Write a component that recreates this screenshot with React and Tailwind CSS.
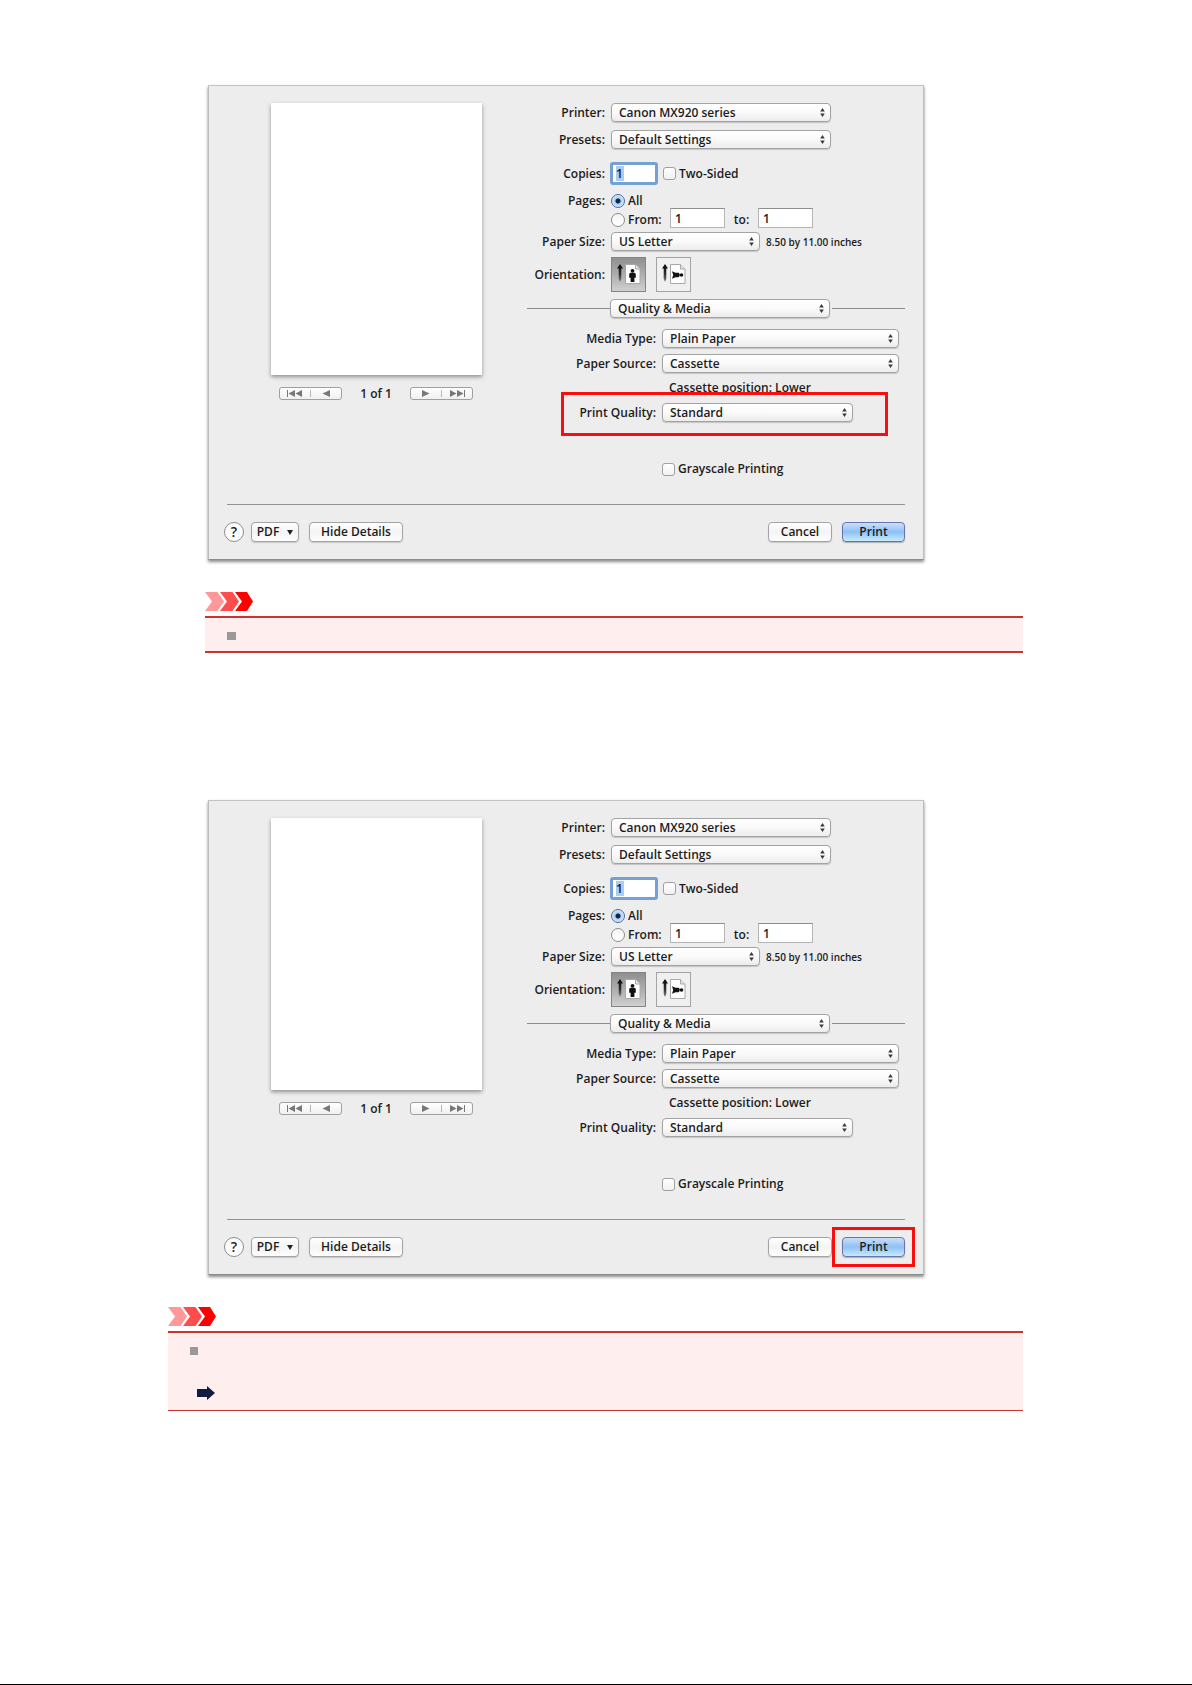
import React, { useId } from "react";

const buttonStyle =
  "h-5 rounded-[4px] border border-[#a3a3a3] bg-linear-to-b from-white via-[#f4f4f4] to-[#fdfdfd] text-center leading-4 shadow-[0_1px_1px_#c8c8c8]";

function Select({ id, label, value, width }) {
  return (
    <div className={`relative ${width}`}>
      <select
        id={id}
        aria-label={label}
        defaultValue={value}
        className="block h-[19px] w-full appearance-none rounded-[4px] border border-[#a3a3a3] bg-linear-to-b from-white via-[#fafafa] to-[#ececec] pl-[7px] leading-4 shadow-[0_1px_1px_#c4c4c4]"
      >
        <option>{value}</option>
      </select>
      <svg viewBox="0 0 5 9" className="pointer-events-none absolute top-[5px] right-[6px] h-[9px] w-[5px]">
        <path d="M2.5 0 4.8 3.4H.2zM2.5 9 .2 5.6h4.6z" fill="#3a3a3a" />
      </svg>
    </div>
  );
}

// Label on the left, control on the right
function Row({ label, htmlFor, children, className = "", labelWidth = "w-[78px]" }) {
  return (
    <div className={`flex items-center ${className}`}>
      <label htmlFor={htmlFor} className={`shrink-0 text-right whitespace-nowrap ${labelWidth}`}>
        {label}
      </label>
      {children}
    </div>
  );
}

function Checkbox({ id, label, className = "" }) {
  return (
    <label htmlFor={id} className={`flex items-center gap-[3px] ${className}`}>
      <input
        id={id}
        type="checkbox"
        className="size-[13px] appearance-none rounded-[3px] border border-[#a0a0a0] bg-linear-to-b from-white to-[#f1f1f1]"
      />
      {label}
    </label>
  );
}

const radioStyle =
  "size-[14px] appearance-none rounded-full border border-[#8c8c8c] bg-linear-to-b from-[#f4f4f4] to-white checked:border-[#4a6c9c] checked:bg-[radial-gradient(circle_at_center,#14263f_0_2px,#a9cdf5_3px,#d3eafd_6px)]";

const fieldStyle = "h-5 w-[55px] border border-[#b4b4b4] border-t-[#8e8e8e] bg-white pl-[4px] leading-4";

function OrientationIcon({ landscape }) {
  const fade = useId();
  return (
    <svg viewBox="0 0 33 33" className="size-[33px]">
      <defs>
        <linearGradient id={fade} gradientUnits="userSpaceOnUse" x1="0" y1="9" x2="0" y2="24">
          <stop offset="0" stopColor="#111" />
          <stop offset="0.5" stopColor="#333" />
          <stop offset="1" stopColor="#888" />
        </linearGradient>
      </defs>
      <path d="M8 6 11 10.500H9.300V21L8 24 6.700 21V10.500H5z" fill={`url(#${fade})`} />
      <path d="M13.5 6.5h10l4.500 4.500v14.500H13.500z" fill="#fdfdfd" stroke="#a8a8a8" />
      <path d="M23.500 6.500V11H28" fill="#e4e4e4" stroke="#a8a8a8" />
      {landscape ? (
        <g fill="#111">
          <circle cx="24.500" cy="17" r="1.800" />
          <path d="M15 13.200l3.500 1.600h3q1.300.6 1.300 2.200t-1.300 2.200h-3L15 20.800l1.200-3.800z" />
        </g>
      ) : (
        <g fill="#111">
          <circle cx="20.500" cy="12.800" r="1.900" />
          <path d="M18.800 14.800h3.400q1.600.2 1.600 1.800v3.200h-1.400V24h-3.800v-4.200h-1.400v-3.200q0-1.600 1.600-1.800z" />
        </g>
      )}
    </svg>
  );
}

function NavButtons({ icons, names }) {
  return (
    <div className="flex h-[13px] w-[63px] items-center rounded-[3px] border border-[#a0a0a0] bg-linear-to-b from-white to-[#f0f0f0]">
      {icons.map((d, i) => (
        <button
          key={names[i]}
          type="button"
          aria-label={names[i]}
          className={`flex h-[7px] flex-1 justify-center ${i === 1 ? "border-l border-[#b5b5b5]" : ""}`}
        >
          <svg viewBox="0 0 16 7" className="h-[7px] w-4">
            <path d={d} fill="#777" />
          </svg>
        </button>
      ))}
    </div>
  );
}

function PrintDialog({ mark }) {
  const id = useId();
  return (
    <form className="max-w-[716px] border border-t-[#c4c4c4] border-r-[#bcbcbc] border-b-[#8c8c8c] border-l-[#bcbcbc] bg-[#ededed] pt-[17px] pr-[18px] pb-[17px] pl-[17px] font-['Open_Sans',sans-serif] text-[12px] leading-4 font-semibold text-[#1c1c1c] shadow-[0_2px_3px_#8a8a8a]">
      <div className="flex justify-between">
        <div className="ml-[45px] w-[211px]">
          <div className="h-[272px] bg-white shadow-[0_2px_4px_#909090]" />
          <div className="mt-[12px] flex h-[13px] items-center justify-between pr-[9px] pl-2">
            <NavButtons
              names={["First page", "Previous page"]}
              icons={["M0 0h1v7H0zM8 0v7L1.500 3.500zM15 0v7L8.500 3.500z", "M12 0v7L4.500 3.500z"]}
            />
            <span>1 of 1</span>
            <NavButtons
              names={["Next page", "Last page"]}
              icons={["M4 0v7l7.500-3.500z", "M1 0v7l6.500-3.500zM8 0v7l6.500-3.500zM15 0h1v7h-1z"]}
            />
          </div>
        </div>

        <div className="w-[378px]">
          <Row label="Printer:" htmlFor={id + "printer"}>
            <Select id={id + "printer"} value="Canon MX920 series" width="ml-[6px] w-[220px]" />
          </Row>
          <Row label="Presets:" htmlFor={id + "presets"} className="mt-2">
            <Select id={id + "presets"} value="Default Settings" width="ml-[6px] w-[220px]" />
          </Row>
          <Row label="Copies:" htmlFor={id + "copies"} className="mt-[13px]">
            <div className="mr-[5px] ml-[5px] flex h-[23px] w-12 items-center rounded-[3px] border-[3px] border-[#75a0d3] bg-white pl-[3px]">
              <input
                id={id + "copies"}
                defaultValue="1"
                className="h-[15px] w-2 bg-[#a9cdf3] leading-4 outline-none"
              />
            </div>
            <Checkbox id={id + "sides"} label="Two-Sided" />
          </Row>

          <div className="mt-2 flex h-[15px] items-center">
            <span className="w-[78px] text-right">Pages:</span>
            <label className="ml-[6px] flex items-center gap-[3px]">
              <input type="radio" name={id + "pages"} defaultChecked className={radioStyle} />
              All
            </label>
          </div>
          <div className="ml-[84px] flex items-end">
            <label className="flex w-[59px] items-center gap-[3px]">
              <input type="radio" name={id + "pages"} className={radioStyle} />
              From:
            </label>
            <input aria-label="From page" defaultValue="1" className={fieldStyle} />
            <label htmlFor={id + "to"} className="w-[33px] text-center">
              to:
            </label>
            <input id={id + "to"} defaultValue="1" className={fieldStyle} />
          </div>

          <Row label="Paper Size:" htmlFor={id + "size"} className="mt-[4px]">
            <Select id={id + "size"} value="US Letter" width="ml-[6px] w-[149px]" />
            <span className="ml-[6px] text-[10px]">8.50 by 11.00 inches</span>
          </Row>
          <div className="mt-[6px] flex items-center">
            <span className="w-[78px] text-right">Orientation:</span>
            <button
              type="button"
              aria-label="Portrait"
              className="ml-[6px] size-[35px] border border-[#858585] bg-linear-to-b from-[#8f8f8f] to-[#cfcfcf]"
            >
              <OrientationIcon />
            </button>
            <button
              type="button"
              aria-label="Landscape"
              className="ml-[10px] size-[35px] border border-[#a3a3a3] bg-[#f0f0f0]"
            >
              <OrientationIcon landscape />
            </button>
          </div>

          <div className="mt-[7px] flex items-center">
            <div className="h-px w-[83px] bg-[#8e8e8e]" />
            <Select label="Options" value="Quality &amp; Media" width="w-[220px]" />
            <div className="ml-[2px] h-px flex-1 bg-[#8e8e8e]" />
          </div>

          <Row label="Media Type:" htmlFor={id + "media"} labelWidth="w-[129px]" className="mt-[11px]">
            <Select id={id + "media"} value="Plain Paper" width="ml-[6px] w-[237px]" />
          </Row>
          <Row label="Paper Source:" htmlFor={id + "source"} labelWidth="w-[129px]" className="mt-[6px]">
            <Select id={id + "source"} value="Cassette" width="ml-[6px] w-[237px]" />
          </Row>
          <p className="mt-[7px] ml-[142px]">Cassette position: Lower</p>
          <div className="relative mt-[7px]">
            <Row label="Print Quality:" htmlFor={id + "quality"} labelWidth="w-[129px]">
              <Select id={id + "quality"} value="Standard" width="ml-[6px] w-[191px]" />
            </Row>
            {mark === "quality" && (
              <div className="pointer-events-none absolute -top-[11px] right-[17px] -bottom-[14px] left-[34px] border-[3px] border-[#fb0d0d]" />
            )}
          </div>
          <Checkbox id={id + "gray"} label="Grayscale Printing" className="mt-[39px] ml-[135px]" />
        </div>
      </div>

      <div className="mt-[27px] ml-px h-px bg-[#929292]" />

      <div className="mt-[17px] -ml-[2px] flex items-center">
        <button
          type="button"
          className="size-5 rounded-full border border-[#8e8e8e] bg-linear-to-b from-[#fafafa] to-white text-[14px] leading-4"
        >
          ?
        </button>
        <button type="button" className={`ml-[7px] flex w-12 items-center justify-center gap-2 ${buttonStyle}`}>
          PDF
          <svg viewBox="0 0 6 5" className="h-[5px] w-[6px]">
            <path d="M0 0h6L3 5z" fill="#222" />
          </svg>
        </button>
        <button type="button" className={`ml-[10px] w-[94px] ${buttonStyle}`}>
          Hide Details
        </button>
        <button type="button" className={`ml-auto w-16 ${buttonStyle}`}>
          Cancel
        </button>
        <div className="relative ml-[10px]">
          <button
            type="submit"
            className="block h-5 w-[63px] rounded-[4px] border border-[#6b74a8] bg-linear-to-b from-[#c9dff8] via-[#8fc0f5] to-[#c4ecff] leading-4 shadow-[0_1px_1px_#b0b0b0]"
          >
            Print
          </button>
          {mark === "print" && (
            <div className="pointer-events-none absolute -inset-[10px] border-[3px] border-[#fb0d0d]" />
          )}
        </div>
      </div>
    </form>
  );
}

function Chevrons() {
  return (
    <svg viewBox="0 0 48 19" className="h-[19px] w-12">
      <path d="M0 0h12.500l6.500 9.500L12.500 19H0l7-9.500z" fill="#ff9999" />
      <path d="M15 0h12.500L34 9.500 27.500 19H15l7-9.500z" fill="#ff4d4d" />
      <path d="M30 0h12l6 9.500L42 19H30l7-9.500z" fill="#ff0000" />
    </svg>
  );
}

export default function App() {
  return (
    <main className="flex min-h-screen flex-col border-b border-black bg-white pt-[85px] pr-[169px] pl-[168px]">
      <section className="pl-[37px]">
        <div className="pl-[3px]">
          <PrintDialog mark="quality" />
        </div>
        <div className="mt-8">
          <Chevrons />
          <div className="mt-[5px] border-y-2 border-[#cc3333] bg-[#ffeeee] pt-[14px] pb-[11px] pl-[22px]">
            <div className="h-2 w-[9px] bg-[#999999]" />
          </div>
        </div>
      </section>

      <section className="mt-[147px]">
        <div className="pl-10">
          <PrintDialog mark="print" />
        </div>
        <div className="mt-8">
          <Chevrons />
          <div className="mt-[5px] border-t-2 border-b border-[#cc3333] bg-[#ffeeee] pt-[14px] pb-[10px] pl-[22px]">
            <div className="size-2 bg-[#999999]" />
            <svg viewBox="0 0 18 14" className="mt-[31px] ml-[7px] h-[14px] w-[18px]">
              <path d="M0 3h10V0l8 7-8 7v-3H0z" fill="#101c42" />
            </svg>
          </div>
        </div>
      </section>
    </main>
  );
}
